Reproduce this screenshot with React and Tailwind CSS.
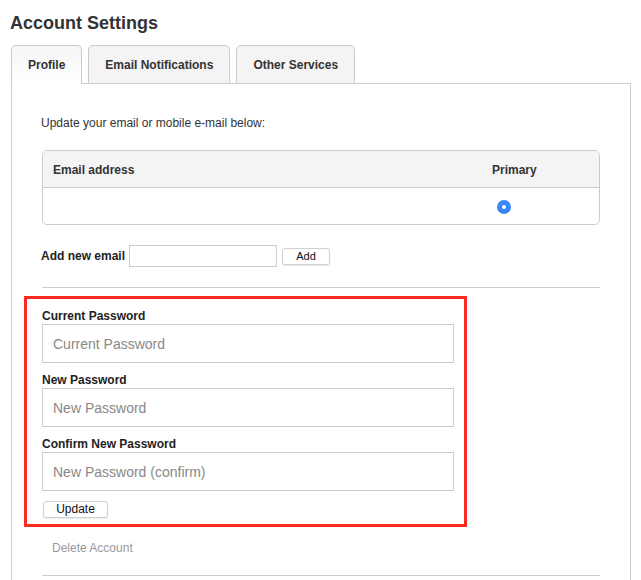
import React from 'react'

const tabs = [
  { label: 'Profile', active: true },
  { label: 'Email Notifications' },
  { label: 'Other Services' },
]

function Tab({ label, active }) {
  if (active) {
    return (
      <div className="relative z-10 -mb-px h-[39px] px-[16px] flex items-center border border-b-0 border-[#ccc] rounded-t-[5px] bg-gradient-to-b from-[#f5f5f5] to-white text-[12px] font-bold text-[#333]">
        {label}
      </div>
    )
  }
  return (
    <div className="h-[38px] px-[16px] flex items-center border border-b-0 border-[#ccc] rounded-t-[5px] bg-[#f4f4f4] text-[12px] font-bold text-[#333]">
      {label}
    </div>
  )
}

function PasswordField({ label, placeholder }) {
  return (
    <div>
      <div className="text-[12px] leading-[15px] font-bold text-[#222]">{label}</div>
      <input
        type="password"
        placeholder={placeholder}
        className="block h-[39px] w-[412px] border border-[#ccc] px-[10px] text-[14px] text-[#333] placeholder:text-[#888] outline-none"
      />
    </div>
  )
}

export default function App() {
  return (
    <div className="min-h-screen bg-white pl-[11px] font-['Liberation_Sans',Arial,sans-serif] text-[#333]">
      <h1 className="-ml-px pt-[10px] text-[18px] leading-[26px] font-bold text-[#333]">Account Settings</h1>

      <div className="mt-[9px] flex items-end gap-[6px]">
        {tabs.map((t) => (
          <Tab key={t.label} {...t} />
        ))}
      </div>

      <div className="w-[620px] border border-[#ccc] px-[30px] pt-[32px] pb-[40px]">
        <p className="text-[12px] leading-[14px] -ml-px">Update your email or mobile e-mail below:</p>

        <div className="mt-[20px] border border-[#ccc] rounded-[5px] overflow-hidden">
          <div className="flex h-[37px] items-center border-b border-[#ccc] bg-[#f4f4f4] text-[12px] font-bold text-[#333]">
            <div className="flex-1 pl-[10px] pt-px">Email address</div>
            <div className="w-[117px] pl-[10px] pt-px">Primary</div>
          </div>
          <div className="flex h-[36px] items-center">
            <div className="flex-1" />
            <div className="w-[117px] pl-[15px] pt-[2px]">
              <span className="flex h-[14px] w-[14px] items-center justify-center rounded-full bg-[#3a86f6]">
                <span className="h-[4px] w-[4px] rounded-full bg-white" />
              </span>
            </div>
          </div>
        </div>

        <div className="mt-[20px] flex h-[22px] items-center">
          <span className="-ml-px text-[12px] font-bold text-[#222]">Add new email</span>
          <input type="text" className="ml-[4px] h-[22px] w-[148px] border border-[#ccc] outline-none" />
          <button className="ml-[5px] h-[17px] w-[48px] rounded-[3px] border border-[#d0d0d0] bg-white text-[11px] leading-[15px] text-[#111] shadow-[0_1px_1px_rgba(0,0,0,0.08)]">
            Add
          </button>
        </div>

        <div className="mt-[20px] h-px bg-[#ccc]" />

        <div className="relative pt-[21px]">
          <div className="pointer-events-none absolute top-[8px] -left-[18px] h-[231px] w-[443px] border-[3px] border-[#fb2a20]" />
          <div className="flex flex-col gap-[10px]">
            <PasswordField label="Current Password" placeholder="Current Password" />
            <PasswordField label="New Password" placeholder="New Password" />
            <PasswordField label="Confirm New Password" placeholder="New Password (confirm)" />
          </div>
          <button className="mt-[10px] ml-px block h-[17px] w-[65px] rounded-[3px] border border-[#d0d0d0] bg-white text-[12px] leading-[15px] text-[#111] shadow-[0_1px_1px_rgba(0,0,0,0.08)]">
            Update
          </button>
        </div>

        <div className="mt-[23px] ml-[10px] text-[12px] leading-[14px] text-[#999]">Delete Account</div>

        <div className="mt-[20px] h-px bg-[#ccc]" />
      </div>
    </div>
  )
}
